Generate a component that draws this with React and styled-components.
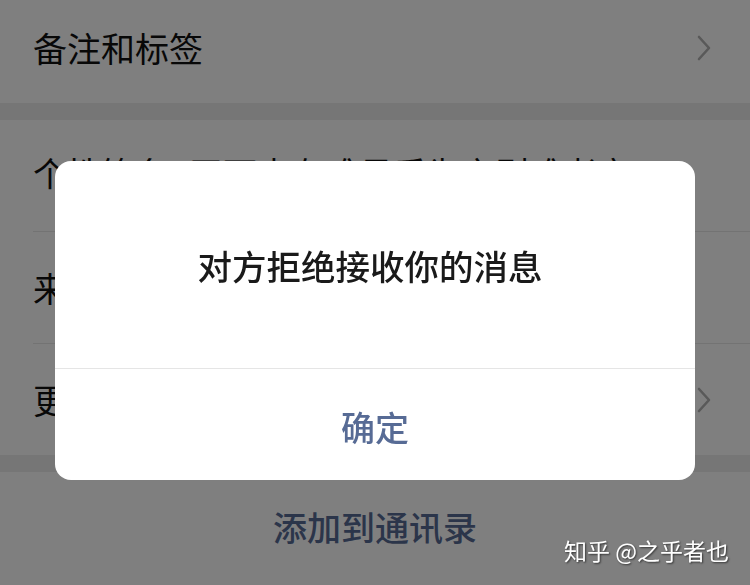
import React from 'react'
import styled, { createGlobalStyle } from 'styled-components'

const GlobalStyle = createGlobalStyle`
  html, body {
    margin: 0;
    padding: 0;
    background: #ededed;
    font-family: "Noto Sans CJK SC", "Noto Sans", sans-serif;
  }
  * { box-sizing: border-box; }
`

const Page = styled.div`
  width: 750px;
  height: 585px;
  overflow: hidden;
  display: flex;
  flex-direction: column;
  background: #ededed;
`

const Group = styled.div`
  background: #fff;
  display: flex;
  flex-direction: column;
  padding-left: 33px;
  margin-bottom: ${p => p.gap || 0}px;
`

const Row = styled.div`
  height: ${p => p.h}px;
  display: flex;
  align-items: center;
  padding-right: 38px;
  padding-bottom: ${p => p.lift || 0}px;
  border-bottom: ${p => (p.line ? '1px solid #e6e6e6' : 'none')};
  font-size: 34px;
  color: #111;
  white-space: nowrap;
  overflow: hidden;
`

const Label = styled.span`
  flex: ${p => (p.fixed ? 'none' : 1)};
`

const Value = styled.span`
  margin-left: 20px;
  flex: 1;
  overflow: hidden;
`

const Chevron = () => (
  <svg width="16" height="28" viewBox="0 0 16 28">
    <path d="M3 3 L13 14 L3 25" fill="none" stroke="#b2b2b2" strokeWidth="2.6" strokeLinecap="round" strokeLinejoin="round" />
  </svg>
)

const ActionRow = styled.div`
  flex: 1;
  background: #fff;
  display: flex;
  justify-content: center;
  align-items: center;
  padding-bottom: 4px;
  font-size: 34px;
  font-weight: 500;
  color: #576b95;
`

const Overlay = styled.div`
  position: fixed;
  inset: 0;
  background: rgba(0, 0, 0, 0.5);
  display: flex;
  justify-content: center;
  align-items: flex-start;
  padding-top: 161px;
`

const Dialog = styled.div`
  width: 640px;
  height: 319px;
  background: #fff;
  border-radius: 16px;
  display: flex;
  flex-direction: column;
  overflow: hidden;
`

const DialogBody = styled.div`
  height: 208px;
  display: flex;
  align-items: center;
  justify-content: center;
  padding-right: 10px;
  font-size: 34.5px;
  font-weight: 500;
  color: #1a1a1a;
  border-bottom: 1px solid #e5e5e5;
`

const DialogButton = styled.div`
  flex: 1;
  display: flex;
  align-items: center;
  justify-content: center;
  padding-top: 3px;
  font-size: 34px;
  font-weight: 500;
  color: #576b95;
`

const Watermark = styled.div`
  position: fixed;
  right: 21px;
  bottom: 18px;
  font-size: 23px;
  color: #fff;
  text-shadow: 1px 1px 2px rgba(0, 0, 0, 0.6);
  white-space: nowrap;
`

export default function App() {
  return (
    <>
      <GlobalStyle />
      <Page>
        <Group gap={17}>
          <Row h={103} lift={8}>
            <Label>备注和标签</Label>
            <Chevron />
          </Row>
        </Group>
        <Group gap={17}>
          <Row h={112} line lift={6}>
            <Label fixed>个性签名</Label>
            <Value>天下事有难易乎为之则难者亦</Value>
          </Row>
          <Row h={112} line>
            <Label>来源</Label>
          </Row>
          <Row h={111}>
            <Label>更多信息</Label>
            <Chevron />
          </Row>
        </Group>
        <ActionRow>添加到通讯录</ActionRow>
      </Page>
      <Overlay>
        <Dialog>
          <DialogBody>对方拒绝接收你的消息</DialogBody>
          <DialogButton>确定</DialogButton>
        </Dialog>
      </Overlay>
      <Watermark>知乎 @之乎者也</Watermark>
    </>
  )
}
